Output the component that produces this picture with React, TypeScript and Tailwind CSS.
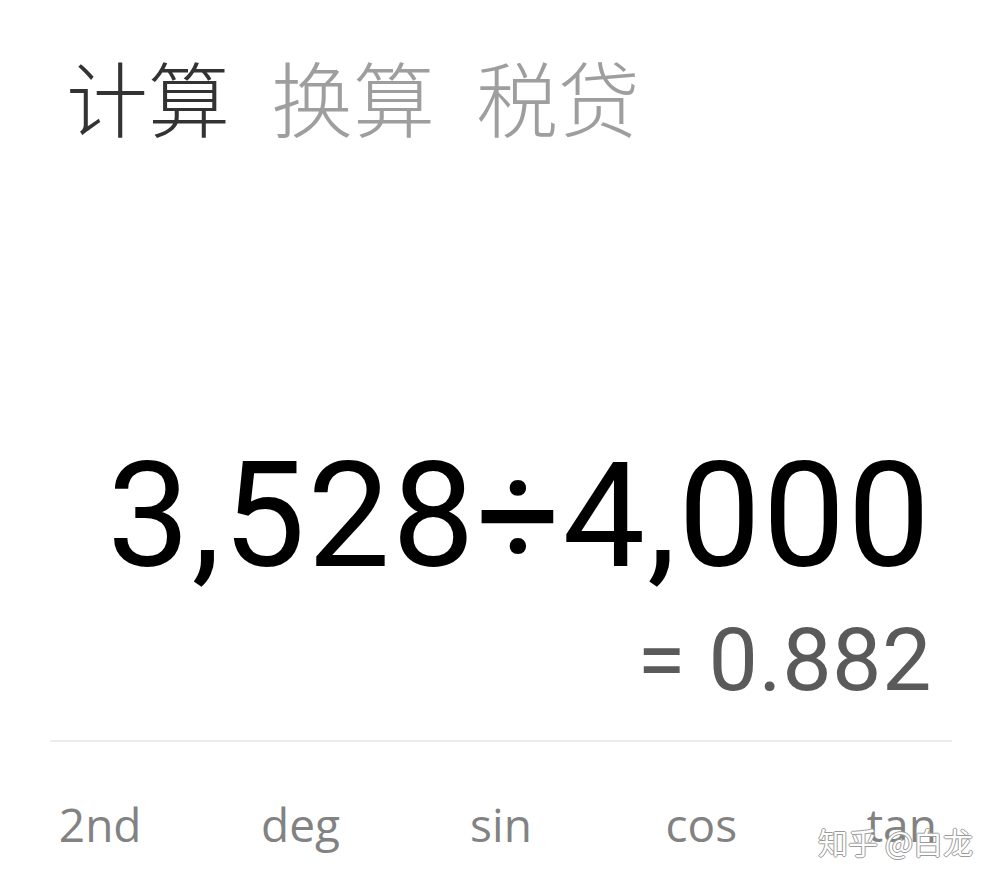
import React from "react";

const tabs = [
  { label: "计算", active: true },
  { label: "换算", active: false },
  { label: "税贷", active: false },
];

const sciKeys = ["2nd", "deg", "sin", "cos", "tan"];

export default function App() {
  return (
    <div className="relative w-[1002px] h-[886px] overflow-hidden bg-white flex flex-col">
      {/* mode tabs */}
      <div
        className="flex gap-[41px] pl-[66px] pt-[55px] text-[82px] leading-none font-light"
        style={{ fontFamily: '"Noto Sans CJK SC", "Noto Sans", sans-serif' }}
      >
        {tabs.map((t) => (
          <span key={t.label} className={t.active ? "text-[#333333]" : "text-[#9e9e9e]"}>
            {t.label}
          </span>
        ))}
      </div>

      {/* display */}
      <div
        className="flex flex-col items-end mt-[306px]"
        style={{ fontFamily: "Roboto, 'Liberation Sans', sans-serif" }}
      >
        <div className="pr-[70px] text-[147px] leading-none text-black tracking-[2px]">3,528÷4,000</div>
        <div className="pr-[70px] mt-[26px] text-[88px] leading-none text-[#5a5a5a] tracking-[0.5px]">= 0.882</div>
      </div>

      {/* divider */}
      <div className="mx-[50px] mt-[36px] h-[2px] bg-[#ececec]" />

      {/* scientific keys */}
      <div
        className="grid grid-cols-5 mt-[59px] text-[46px] leading-none text-[#828282]"
        style={{ fontFamily: '"Open Sans", "Noto Sans", sans-serif' }}
      >
        {sciKeys.map((k) => (
          <div key={k} className="text-center">
            {k}
          </div>
        ))}
      </div>

      {/* watermark */}
      <div
        className="absolute left-[818px] top-[826px] text-[30px] leading-none text-white"
        style={{
          fontFamily: '"Noto Sans CJK SC", sans-serif',
          textShadow:
            "1px 0 0 #9a9a9a, -1px 0 0 #9a9a9a, 0 1px 0 #9a9a9a, 0 -1px 0 #9a9a9a",
        }}
      >
        知乎 @白龙
      </div>
    </div>
  );
}
